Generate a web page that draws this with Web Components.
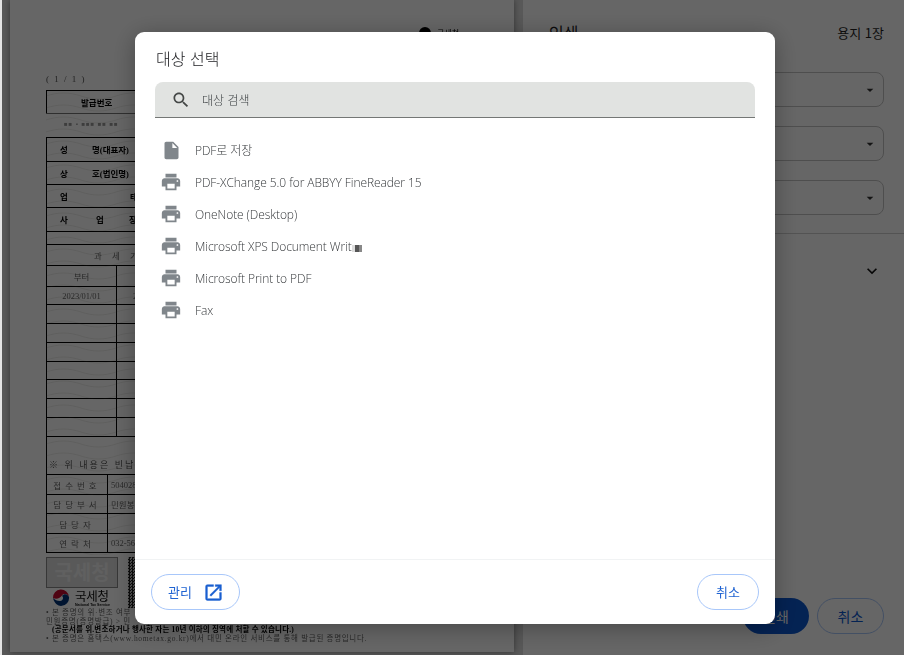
<!DOCTYPE html>
<html lang="ko">
<head>
<meta charset="utf-8">
<title>인쇄</title>
<style>
  html, body { margin: 0; height: 100%; overflow: hidden; }
  body { font-family: "Noto Sans CJK KR", "Noto Sans", sans-serif; }
</style>
</head>
<body>
<print-page>
  <doc-preview slot="preview"></doc-preview>
  <print-settings slot="settings"></print-settings>
  <dest-dialog slot="dialog">
    <dest-item icon="file">PDF로 저장</dest-item>
    <dest-item>PDF-XChange 5.0 for ABBYY FineReader 15</dest-item>
    <dest-item>OneNote (Desktop)</dest-item>
    <dest-item>Microsoft XPS Document Writ<span style="display:inline-block;width:10px;height:7px;vertical-align:-1px;background:linear-gradient(90deg,#ddd 0 30%,#555 30% 70%,#888 70%)"></span></dest-item>
    <dest-item>Microsoft Print to PDF</dest-item>
    <dest-item>Fax</dest-item>
  </dest-dialog>
</print-page>

<script>
const ICONS = {
  file: 'M14 2H6c-1.1 0-2 .9-2 2v16c0 1.1.9 2 2 2h12c1.1 0 2-.9 2-2V8l-6-6zm-1 7V3.5L18.5 9H13z',
  print: 'M19 8H5c-1.66 0-3 1.34-3 3v6h4v4h12v-4h4v-6c0-1.66-1.34-3-3-3zm-3 11H8v-5h8v5zm3-7c-.55 0-1-.45-1-1s.45-1 1-1 1 .45 1 1-.45 1-1 1zm-1-9H6v4h12V3z',
  search: 'M15.5 14h-.79l-.28-.27C15.41 12.59 16 11.11 16 9.5 16 5.91 13.09 3 9.5 3S3 5.91 3 9.5 5.91 16 9.5 16c1.61 0 3.09-.59 4.23-1.57l.27.28v.79l5 4.99L20.49 19l-4.99-5zm-6 0C7.01 14 5 11.99 5 9.5S7.01 5 9.5 5 14 7.01 14 9.5 11.99 14 9.5 14z',
  open: 'M19 19H5V5h7V3H5c-1.11 0-2 .9-2 2v14c0 1.1.89 2 2 2h14c1.1 0 2-.9 2-2v-7h-2v7zM14 3v2h3.59l-9.83 9.83 1.41 1.41L19 6.41V10h2V3h-7z',
  drop: 'M7 10l5 5 5-5z',
  chevron: 'M7.41 8.59 12 13.17l4.59-4.58L18 10l-6 6-6-6z'
};

function svgIcon(name, size, color) {
  return `<svg width="${size}" height="${size}" viewBox="0 0 24 24" fill="${color}" aria-hidden="true"><path d="${ICONS[name]}"/></svg>`;
}

class PrintPage extends HTMLElement {
  constructor() {
    super();
    this.attachShadow({ mode: 'open' });
    this.shadowRoot.innerHTML = `
      <style>
        :host { display: flex; width: 904px; height: 655px; position: relative; overflow: hidden; background: #fff; }
        .scrim { position: absolute; inset: 0; background: rgba(0,0,0,.6); }
        .edge { position: absolute; left: 0; top: 0; bottom: 0; width: 2px; background: #e4e4e4; }
        .dialog { position: absolute; left: 135px; top: 32px; }
      </style>
      <slot name="preview"></slot>
      <slot name="settings"></slot>
      <div class="scrim"></div>
      <div class="edge"></div>
      <div class="dialog"><slot name="dialog"></slot></div>
    `;
  }
}

class DocPreview extends HTMLElement {
  constructor() {
    super();
    this.attachShadow({ mode: 'open' });
    // one row per ruled line of the certificate, heights from the line positions
    const row = (h, cells, extra = '') => `<div class="r" style="height:${h}px;${extra}">${cells}</div>`;
    const cols = (a, b, c, d) => `<div class="c l" style="width:${a}px;${c || ''}">${b}</div><div class="c l2">${d || ''}</div>`;
    const blanks = [19, 19, 19, 18, 19, 19, 19].map(h => row(h, cols(70, ''))).join('');
    this.shadowRoot.innerHTML = `
      <style>
        :host { display: block; width: 523px; height: 655px; flex: none; background: #dcdcdc; }
        .sheet { position: relative; box-sizing: border-box; margin-left: 10px; width: 504px; height: 652px; padding: 27px 33px 0 36px; background: #fff; box-shadow: 0 0 6px rgba(0,0,0,.4); font-family: "Liberation Serif", "Noto Sans CJK KR", serif; color: #000; filter: blur(.4px); }
        .stamp { display: flex; justify-content: flex-end; align-items: center; gap: 7px; height: 11px; padding-right: 22px; font-size: 8px; }
        .dot { width: 12px; height: 12px; border-radius: 50%; background: #000; margin-right: -1px; }
        .pageno { margin-top: 36px; height: 16px; font-size: 9px; letter-spacing: 1.5px; color: #555; }
        .r { display: flex; box-sizing: border-box; border: solid #000; border-width: 1.5px 1px 0 1px; font-size: 8.5px; font-weight: 700; white-space: nowrap; }
        .c { display: flex; align-items: center; box-sizing: border-box; height: 100%; overflow: hidden; }
        .l { flex: none; border-right: 1.5px solid #000; justify-content: center; font-weight: 400; color: #666; }
        .l2 { flex: 1; padding-left: 3px; font-weight: 400; color: #666; }
        .g { letter-spacing: 4px; }
        .gap { height: 24px; display: flex; align-items: flex-start; box-sizing: border-box; border-top: 1.5px solid #777; }
        .gap span { margin: 7px 0 0 18px; font-size: 6px; color: #999; letter-spacing: 1px; }
        .label { position: relative; width: 100%; }
        .label span { position: absolute; top: 5px; }
        .note { display: flex; align-items: flex-end; box-sizing: border-box; height: 38px; border: solid #000; border-width: 1.5px 1px 0; padding: 0 0 3px 2px; font-size: 9px; color: #555; letter-spacing: 2.1px; white-space: nowrap; }
        .low { display: flex; gap: 10px; margin-top: 4px; }
        .seal { box-sizing: border-box; width: 72px; height: 31px; border: 1px solid #8a8a8a; background: #dedede; color: #f0f0f0; font: 700 20px/28px "Noto Sans CJK KR", sans-serif; text-align: center; }
        .qr { width: 56px; height: 51px; background: repeating-conic-gradient(#222 0 25%, #ccc 0 50%) 0 0 / 3px 3px; }
        .logo { display: flex; align-items: flex-start; gap: 5px; height: 19px; margin: 1px 0 0 6px; }
        .brand { font: 400 12.5px/14px "Noto Sans CJK KR", sans-serif; color: #111; letter-spacing: -.3px; }
        .brand small { display: block; font: 700 3.6px/4px "Liberation Sans", sans-serif; letter-spacing: 0; }
        .foot { font-size: 7.5px; line-height: 8.5px; letter-spacing: .7px; color: #666; white-space: nowrap; margin-top: 1px; }
        .foot b { color: #000; display: block; padding-left: 6px; letter-spacing: .2px; }
        .waves { position: absolute; left: 36px; top: 90px; width: 440px; height: 465px; opacity: .14; pointer-events: none; }
      </style>
      <div class="sheet">
        <svg class="waves" aria-hidden="true">
          <defs><pattern id="w" width="70" height="12" patternUnits="userSpaceOnUse"><path d="M0 6c12-4 23-4 35 0s23 4 35 0" fill="none" stroke="#665" stroke-width=".8"/></pattern></defs>
          <rect width="100%" height="100%" fill="url(#w)"/>
        </svg>
        <div class="stamp"><span class="dot"></span><span>국세청</span></div>
        <div class="pageno">( 1 / 1 )</div>
        <div class="r" style="height:23px;border-right:0;padding-left:34px;align-items:center"><span>발급번호</span></div>
        <div class="gap"><span>■■ ▪ ■■■ ■■ ■■</span></div>
        ${row(24, '<div class="label"><span style="left:13px">성</span><span style="left:45px">명(대표자)</span></div>')}
        ${row(23, '<div class="label"><span style="left:13px">상</span><span style="left:45px">호(법인명)</span></div>')}
        ${row(23, '<div class="label"><span style="left:13px">업</span><span style="left:83px">태</span></div>')}
        ${row(24, '<div class="label"><span style="left:13px">사</span><span style="left:49px">업</span><span style="left:82px">장</span></div>')}
        ${row(13, '')}
        ${row(21, '<div class="c l2 g" style="padding-left:47px">과 세 기 간</div>')}
        ${row(21, cols(70, '부터'), '')}
        ${row(18, cols(70, '2023/01/01', '', '<span style="padding-left:13px">2</span>'))}
        ${blanks}
        <div class="note">※ 위 내용은 빈납인 인</div>
        ${row(20, cols(61, '<span class="g">접수번호</span>', '', '504028'))}
        ${row(19, cols(61, '<span class="g">담당부서</span>', '', '민원봉사'))}
        ${row(20, cols(61, '<span class="g">담당자</span>'))}
        ${row(20, cols(61, '<span class="g">연락처</span>', '', '032-56'), 'border-bottom:1.5px solid #000')}
        <div class="low">
          <div>
            <div class="seal">국세청</div>
            <div class="logo">
              <svg width="18" height="18" viewBox="0 0 18 18" aria-hidden="true"><circle cx="9" cy="9" r="8.5" fill="#fff"/><path d="M1 9a8 8 0 0 1 16-1c-1-3-5-4-7-1.5S5 11 1 9z" fill="#c60c30"/><path d="M1 9c1 5 5 8 8 8a8 8 0 0 0 8-9c-1-3-5-4-7-1 2 1 1 5-2 5S3 11 1 9z" fill="#003478"/></svg>
              <div class="brand">국세청<small>National Tax Service</small></div>
            </div>
          </div>
          <div class="qr"></div>
        </div>
        <div class="foot">
          • 본 증명의 위·변조 여부<br>
          민원증명(증명발급) &gt; 민
          <b>(공문서를 위.변조하거나 행사한 자는 10년 이하의 징역에 처할 수 있습니다.)</b>
          • 본 증명은 홈택스(www.hometax.go.kr)에서 대민 온라인 서비스를 통해 발급된 증명입니다.
        </div>
      </div>
    `;
  }
}

class PrintSettings extends HTMLElement {
  constructor() {
    super();
    this.attachShadow({ mode: 'open' });
    const select = `<div class="select">${svgIcon('drop', 16, '#333')}</div>`;
    this.shadowRoot.innerHTML = `
      <style>
        :host { display: flex; flex-direction: column; flex: 1; min-width: 0; box-sizing: border-box; height: 655px; background: #fff; color: #1f1f1f; font-size: 13px; }
        .head { display: flex; justify-content: space-between; align-items: center; height: 24px; padding: 20px 20px 0 26px; }
        .head h1 { margin: 0; font-size: 16px; font-weight: 400; color: #1f1f1f; }
        .selects { display: flex; flex-direction: column; gap: 19px; margin-top: 28px; padding: 0 20px 0 117px; }
        .select { display: flex; align-items: center; justify-content: flex-end; height: 35px; box-sizing: border-box; padding-right: 5px; border: 1px solid #c4c4c4; border-radius: 8px; }
        .more { display: flex; justify-content: flex-end; align-items: center; margin-top: 18px; height: 74px; padding-right: 22px; border-top: 1px solid #d0d0d0; box-sizing: border-box; }
        .actions { display: flex; justify-content: flex-end; gap: 8px; margin-top: auto; padding: 0 20px 21px 0; }
        .btn { display: flex; align-items: center; justify-content: center; box-sizing: border-box; height: 36px; border-radius: 18px; font-size: 14px; }
        .print { width: 66px; background: #0b57d0; color: #fff; }
        .cancel { width: 67px; border: 1px solid #a8c7fa; color: #0b57d0; }
      </style>
      <div class="head"><h1>인쇄</h1><span>용지 1장</span></div>
      <div class="selects">${select}${select}${select}</div>
      <div class="more">${svgIcon('chevron', 20, '#111')}</div>
      <div class="actions"><div class="btn print">인쇄</div><div class="btn cancel">취소</div></div>
    `;
  }
}

class PillButton extends HTMLElement {
  constructor() {
    super();
    this.attachShadow({ mode: 'open' });
    this.shadowRoot.innerHTML = `
      <style>
        :host { display: inline-flex; align-items: center; gap: 11px; box-sizing: border-box; height: 36px; padding: 0 18px; border: 1px solid #a8c7fa; border-radius: 18px; background: #fff; color: #1f63d2; font-size: 13px; }
        :host([icon]) { padding: 0 15px 0 16px; }
        :host(:not([icon])) { gap: 0; }
        .label { position: relative; top: -1px; }
      </style>
      <span class="label"><slot></slot></span>
      <slot name="icon"></slot>
    `;
  }
}

class DestItem extends HTMLElement {
  constructor() {
    super();
    this.attachShadow({ mode: 'open' });
  }

  connectedCallback() {
    const file = this.getAttribute('icon') === 'file';
    this.shadowRoot.innerHTML = `
      <style>
        :host { display: flex; align-items: center; height: 32px; color: #35383b; font-family: "Open Sans", "Noto Sans CJK KR", sans-serif; font-size: 12px; font-weight: 300; letter-spacing: -.08px; white-space: nowrap; }
        .icon { display: flex; justify-content: center; width: 40px; margin-right: 4px; }
      </style>
      <span class="icon">${file ? svgIcon('file', 21, '#80868b') : svgIcon('print', 22, '#80868b')}</span>
      <span><slot></slot></span>
    `;
  }
}

class DestDialog extends HTMLElement {
  constructor() {
    super();
    this.attachShadow({ mode: 'open' });
    this.shadowRoot.innerHTML = `
      <style>
        :host { display: flex; flex-direction: column; box-sizing: border-box; width: 640px; height: 592px; background: #fff; border-radius: 9px; box-shadow: 0 4px 24px rgba(0,0,0,.32); color: #3c4043; }
        h2 { margin: 0; padding: 14px 20px 0 21px; height: 35px; box-sizing: border-box; font-size: 16px; line-height: 24px; font-weight: 300; color: #202124; }
        .search { display: flex; align-items: center; gap: 11px; height: 36px; box-sizing: border-box; margin: 15px 20px 0; padding-left: 16px; background: #e1e3e1; border-bottom: 1px solid #747775; border-radius: 8px 8px 0 0; font-size: 12px; font-weight: 300; color: #3c4043; }
        .list { flex: 1; padding: 16px 0 0 16px; }
        .foot { display: flex; justify-content: space-between; align-items: center; height: 65px; box-sizing: border-box; padding: 0 16px; border-top: 1px solid #f1f3f4; }
        .ext { display: block; height: 21px; }
        .ext path { stroke: #1a5fd0; stroke-width: .5; }
      </style>
      <h2>대상 선택</h2>
      <div class="search">${svgIcon('search', 20, '#444746')}<span>대상 검색</span></div>
      <div class="list"><slot></slot></div>
      <div class="foot">
        <pill-button icon>관리<span class="ext" slot="icon">${svgIcon('open', 21, '#1a5fd0')}</span></pill-button>
        <pill-button>취소</pill-button>
      </div>
    `;
  }
}

customElements.define('print-page', PrintPage);
customElements.define('doc-preview', DocPreview);
customElements.define('print-settings', PrintSettings);
customElements.define('pill-button', PillButton);
customElements.define('dest-item', DestItem);
customElements.define('dest-dialog', DestDialog);
</script>
</body>
</html>
